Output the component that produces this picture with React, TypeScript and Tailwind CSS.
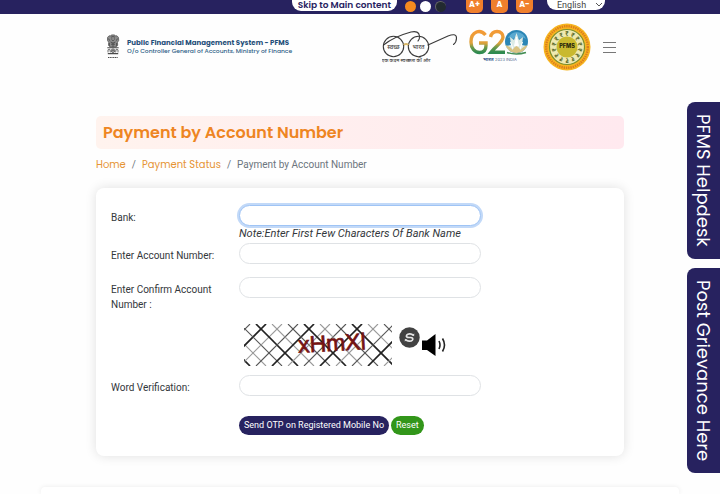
import type { ReactNode } from "react";

const inputBase =
  "block h-[21px] w-full rounded-full border bg-white px-2 text-[11px] text-[#212529] outline-none";
const inputIdle = "border-[#dfe2e5]";
const inputActive = "border-[#9fc4f5] shadow-[0_0_0_2px_#c2d9f8]";

function Row({ id, label, className, children }: { id: string; label: string; className?: string; children: ReactNode }) {
  return (
    <div className={`flex ${className ?? ""}`}>
      <label htmlFor={id} className="w-[128px] shrink-0 pt-[5px] pr-5 text-[10px] leading-[15px] text-[#33373b]">
        {label}
      </label>
      <div className="w-full max-w-[242px]">{children}</div>
    </div>
  );
}

function Emblem() {
  return (
    <svg viewBox="0 0 14 26" className="h-[26px] w-[14px] shrink-0" fill="none" stroke="#4b4b4b" aria-label="State emblem of India">
      <path d="M1.5 3.5 3 1.8 4.6 2 5.4.9h3.2l.8 1.1 1.6-.2 1.5 1.7.2 3-1.2 1.8.2 3-1.6 1.8H4.1l-1.6-1.8.2-3-1.2-1.8z" fill="#8b8b8b" strokeWidth=".7" />
      <path d="M5 3.2q2-1.4 4 0M5.2 5h1M8 5h1M6.2 6.5h1.6M4.6 8q2.4 2.2 4.8 0M5 10.2h4M2.6 4.6l1 2M11.4 4.6l-1 2M3.4 9v3M10.6 9v3M7 9v4" strokeWidth=".9" />
      <path d="M1.3 13.8h11.4M1.8 19.6h10.4" strokeWidth="1.1" />
      <circle cx="7" cy="16.7" r="1.8" strokeWidth=".8" />
      <path d="M7 15v3.4M5.3 16.7h3.4M2 18.4v-2.6l1.8-.6.6 3.2M12 18.4v-2.6l-1.8-.6-.6 3.2" strokeWidth=".8" />
      <path d="M2 23.5h10" strokeWidth="1" strokeDasharray="1.2 .5" />
    </svg>
  );
}

function SwachhBharat() {
  return (
    <svg viewBox="0 0 76 36" className="h-[36px] w-[76px] shrink-0" fill="none" aria-label="Swachh Bharat">
      <g stroke="#3a3a3a" strokeWidth="1.1" strokeLinecap="round">
        <circle cx="11.5" cy="17.5" r="10.2" />
        <circle cx="36.5" cy="17.5" r="10.2" />
        <path d="M1.5 16C9 10 18 6 29 3c5-1 8 0 8.5 4 .2 2-.5 4-1.5 5" />
        <path d="M46 16 66 7c5-2 8.5-2 8.5 2 0 3-1 5-3 6.5" />
      </g>
      <path d="M21.7 16q2.4-2 4.7 0" stroke="#d9b86a" strokeWidth="2" />
      <g fill="#444" fontFamily="Noto Sans, sans-serif" fontWeight="500" textAnchor="middle">
        <text x="11.5" y="20" fontSize="6">स्वच्छ</text>
        <text x="36.5" y="20" fontSize="6">भारत</text>
        <text x="24" y="33" fontSize="5">एक कदम स्वच्छता की ओर</text>
      </g>
    </svg>
  );
}

function G20() {
  return (
    <svg viewBox="0 0 60 36" className="h-[36px] w-[60px] shrink-0" fill="none" aria-label="G20 India">
      <defs>
        <linearGradient id="tri" x1="0" y1="0" x2="0" y2="1">
          <stop offset="0" stopColor="#f39a35" />
          <stop offset=".55" stopColor="#dfa23c" />
          <stop offset=".75" stopColor="#6d9a4a" />
          <stop offset="1" stopColor="#2f8a50" />
        </linearGradient>
      </defs>
      <path d="M16.500 6C14 3 10.500 1.800 7.500 3 3.500 4.500 2 8.500 2 13c0 6 3.500 10.500 8.500 10.500 4 0 6.500-2.500 6.500-7V14h-7" stroke="url(#tri)" strokeWidth="3.400" />
      <path d="M21.500 8C22.500 4 25 2.500 28 2.500c4 0 6 2.500 6 5.500 0 5-7 9-12 15.300h14" stroke="url(#tri)" strokeWidth="3.400" />
      <circle cx="47.500" cy="12.500" r="11.500" fill="#2c86b5" />
      <path d="M39 9q3-6 9-6 7 1 9 7-4-3-6 0-4-4-7 0-2-2-5-1z" fill="#5aa9d0" />
      <path d="m47.500 4 2.500 7 4-3-1 8 5 1c-2 5-6 6-10.500 6S39 22 37 17l5-1-1-8 4 3z" fill="#dcebe6" />
      <path d="m47.500 8 2 9h-4zM41.500 13l2.500 7M53.500 13 51 20" stroke="#fff" fill="#fff" />
      <path d="M36.500 16c2 5 6 8 11 8s9-3 11-8c-3 1-6 3-7 5-1-2-2-3-4-4-2 1-3 2-4 4-1-2-4-4-7-5z" fill="#d9c383" />
      <path d="M38 23.500q9 3 19 0" stroke="#438d54" strokeWidth="1.500" />
      <text x="14" y="32" fill="#31528c" fontSize="5" fontWeight="700" fontFamily="Noto Sans, sans-serif">भारत</text>
      <text x="26" y="32" fill="#53698f" fontSize="4" fontFamily="Inter, sans-serif">2023 INDIA</text>
    </svg>
  );
}

function PfmsSeal() {
  const spokes = Array.from({ length: 14 }, (_, i) => (i * 360) / 14);
  return (
    <svg viewBox="0 0 48 48" className="size-[48px] shrink-0" aria-label="PFMS seal">
      <circle cx="24" cy="24" r="23.500" fill="#f7b41f" />
      <circle cx="24" cy="24" r="20.800" fill="none" stroke="#dc7d1d" strokeWidth="2.400" strokeDasharray="1.400 .9" />
      <circle cx="24" cy="24" r="17.500" fill="#eee9b1" stroke="#7d8f2c" strokeWidth="1.200" />
      <g fill="#5e6d2c" fontSize="6" fontWeight="700" fontFamily="Inter, sans-serif" textAnchor="middle">
        {spokes.map((a) => (
          <text key={a} x="24" y="13" transform={`rotate(${a} 24 24)`}>₹</text>
        ))}
      </g>
      <circle cx="24" cy="24" r="10.500" fill="#c9b92f" />
      <text x="24" y="25" fill="#29270c" fontSize="5.500" fontWeight="800" fontFamily="Inter, sans-serif" textAnchor="middle">PFMS</text>
    </svg>
  );
}

function Captcha() {
  const starts = [-36, -20, -4, 12, 28, 44, 60, 76, 92, 108, 124, 140];
  return (
    <svg viewBox="0 0 148 42" className="h-[42px] w-[148px] shrink-0" fill="none" role="img" aria-label="Captcha">
      {starts.map((x, i) => (
        <g key={x}>
          <path d={`M${x} 0l42 42`} stroke={i % 3 === 0 ? "#222" : i % 3 === 1 ? "#999" : "#555"} strokeWidth={i % 3 === 0 ? 1.7 : 1.1} />
          <path d={`M${x + 42} 0l-42 42`} stroke={i % 3 === 1 ? "#222" : i % 3 === 2 ? "#999" : "#555"} strokeWidth={i % 3 === 1 ? 1.7 : 1.1} />
        </g>
      ))}
      <text x="54" y="27" fontSize="23" fill="#741313" stroke="#741313" strokeWidth=".7" fontFamily="Liberation Sans, sans-serif" transform="rotate(-3 88 20)">
        xHmXl
      </text>
    </svg>
  );
}

const sizeButton = "h-[13px] w-[17px] rounded-b-[5px] bg-[#f07f2c] pb-1 text-[8px] leading-[9px] font-bold text-white";

export default function App() {
  return (
    <div className="relative flex h-screen flex-col overflow-hidden bg-[#fefefe] font-[Roboto,sans-serif]">
      <div className="flex h-[14px] shrink-0 items-start justify-end bg-[#27225f] pr-[115px] font-[Poppins,Inter,sans-serif]">
        <a href="#main" className="h-[11px] rounded-b-[9px] bg-white px-[6px] text-[9px] leading-[10px] font-semibold whitespace-nowrap text-[#27225f]">
          Skip to Main content
        </a>
        <div className="mt-px ml-2 flex gap-1">
          <button aria-label="Orange theme" className="size-[11px] rounded-full bg-[#f58a1f]" />
          <button aria-label="White theme" className="size-[11px] rounded-full bg-white" />
          <button aria-label="Dark theme" className="size-[11px] rounded-full border-t border-l border-[#666] bg-[#222a30]" />
        </div>
        <div className="ml-5 flex gap-2">
          <button className={sizeButton}>A+</button>
          <button className={sizeButton}>A</button>
          <button className={sizeButton}>A-</button>
        </div>
        <div className="relative ml-[14px]">
          <select aria-label="Language" className="block h-[10px] w-[58px] appearance-none rounded-b-[9px] bg-white pl-[10px] font-[Roboto,sans-serif] text-[9px] leading-[9px] text-[#444]">
            <option>English</option>
          </select>
          <svg viewBox="0 0 8 5" className="pointer-events-none absolute top-[2px] right-[2px] h-[5px] w-2" fill="none" stroke="#555">
            <path d="m1 1 3 3 3-3" />
          </svg>
        </div>
      </div>

      <header className="flex h-[66px] shrink-0 items-center justify-between pr-[104px] pl-[106px]">
        <a href="#home" className="flex items-center gap-[7px] font-[Poppins,Inter,sans-serif] whitespace-nowrap">
          <Emblem />
          <span className="flex flex-col">
            <span className="text-[7px] leading-[9px] font-bold text-[#1f4e79]">Public Financial Management System - PFMS</span>
            <span className="pb-px text-[6px] leading-[9px] font-medium text-[#2f5f87]">O/o Controller General of Accounts, Ministry of Finance</span>
          </span>
        </a>
        <div className="flex items-center">
          <SwachhBharat />
          <div className="ml-[11px]"><G20 /></div>
          <div className="ml-[14px]"><PfmsSeal /></div>
          <button aria-label="Menu" className="ml-3 flex w-[13px] flex-col gap-1">
            <span className="h-px w-full bg-[#777]" />
            <span className="h-px w-full bg-[#777]" />
            <span className="h-px w-full bg-[#777]" />
          </button>
        </div>
      </header>

      <main id="main" className="mx-24 mt-9 shrink-0">
        <h1 className="rounded-[5px] bg-linear-to-r from-[#fff3ee] to-[#ffe9ef] px-[7px] font-[Poppins,Inter,sans-serif] text-[16px] leading-[33px] font-semibold whitespace-nowrap text-[#ee8522]">
          Payment by Account Number
        </h1>
        <nav aria-label="Breadcrumb" className="mt-2 flex gap-[6px] text-[10px] leading-4 whitespace-nowrap text-[#6c757d]">
          <a href="#home" className="font-[Poppins,Inter,sans-serif] text-[#e69435]">Home</a>
          <span>/</span>
          <a href="#status" className="font-[Poppins,Inter,sans-serif] text-[#e69435]">Payment Status</a>
          <span>/</span>
          <span>Payment by Account Number</span>
        </nav>

        <form onSubmit={(e) => e.preventDefault()} className="mt-[15px] rounded-[8px] bg-white px-[15px] pt-[17px] pb-[21px] shadow-[0_0_12px_rgba(0,0,0,0.12)]">
          <Row id="bank" label="Bank:">
            <input id="bank" className={`${inputBase} ${inputActive}`} />
            <p className="text-[11px] leading-4 whitespace-nowrap text-[#33373b] italic">Note:Enter First Few Characters Of Bank Name</p>
          </Row>
          <Row id="account" label="Enter Account Number:" className="mt-px">
            <input id="account" className={`${inputBase} ${inputIdle}`} />
          </Row>
          <Row id="confirm" label="Enter Confirm Account Number :" className="mt-[13px]">
            <input id="confirm" className={`${inputBase} ${inputIdle}`} />
          </Row>
          <div className="mt-3 ml-[133px] flex">
            <Captcha />
            <button type="button" aria-label="Refresh captcha" className="mt-[3px] ml-[7px] size-[21px]">
              <svg viewBox="0 0 21 21" fill="none">
                <circle cx="10.500" cy="10.500" r="10.200" fill="#424242" />
                <path d="M14 8.300C12.800 6.500 9 6.300 7.800 8s.2 2.500 2.200 2.500h1.500c2 0 3 1.200 1.800 2.700-1.300 1.500-5 1.300-6.300-.5" stroke="#e5e5e5" strokeWidth="1.700" />
                <path d="m15.300 6.500-.2 2.700-2.300-1zM5.700 14.500l.2-2.700 2.300 1z" fill="#e5e5e5" />
              </svg>
            </button>
            <button type="button" aria-label="Play captcha audio" className="mt-[9px] ml-[1px] h-6 w-[26px]">
              <svg viewBox="0 0 26 24" fill="none">
                <path d="M1 7.500h5L14.500 1v22L6 17H1z" fill="#000" />
                <path d="M18 8q2 4 0 8M21.500 5.500q4 6.500 0 13" stroke="#222" strokeWidth="1.600" />
              </svg>
            </button>
          </div>
          <Row id="word" label="Word Verification:" className="mt-[9px]">
            <input id="word" className={`${inputBase} ${inputIdle}`} />
          </Row>
          <div className="mt-5 ml-[128px] flex gap-[2px] text-[9px] leading-[19px] whitespace-nowrap text-white">
            <button type="submit" className="rounded-full bg-[#27225f] px-[5px]">Send OTP on Registered Mobile No</button>
            <button type="reset" className="rounded-full bg-[#32961a] px-[5px]">Reset</button>
          </div>
        </form>
      </main>

      <section className="mx-[41px] mt-[31px] flex-1 rounded-t-[4px] bg-white shadow-[0_0_5px_rgba(0,0,0,0.08)]" />

      <aside className="absolute top-[102px] right-0 flex flex-col items-end gap-[9px] font-[Poppins,Inter,sans-serif] text-[18px] leading-[33px] whitespace-nowrap text-white">
        <a href="#helpdesk" className="rounded-l-[8px] bg-[#27225f] px-3 [writing-mode:vertical-rl]">PFMS Helpdesk</a>
        <a href="#grievance" className="rounded-l-[8px] bg-[#27225f] px-3 [writing-mode:vertical-rl]">Post Grievance Here</a>
      </aside>
    </div>
  );
}
